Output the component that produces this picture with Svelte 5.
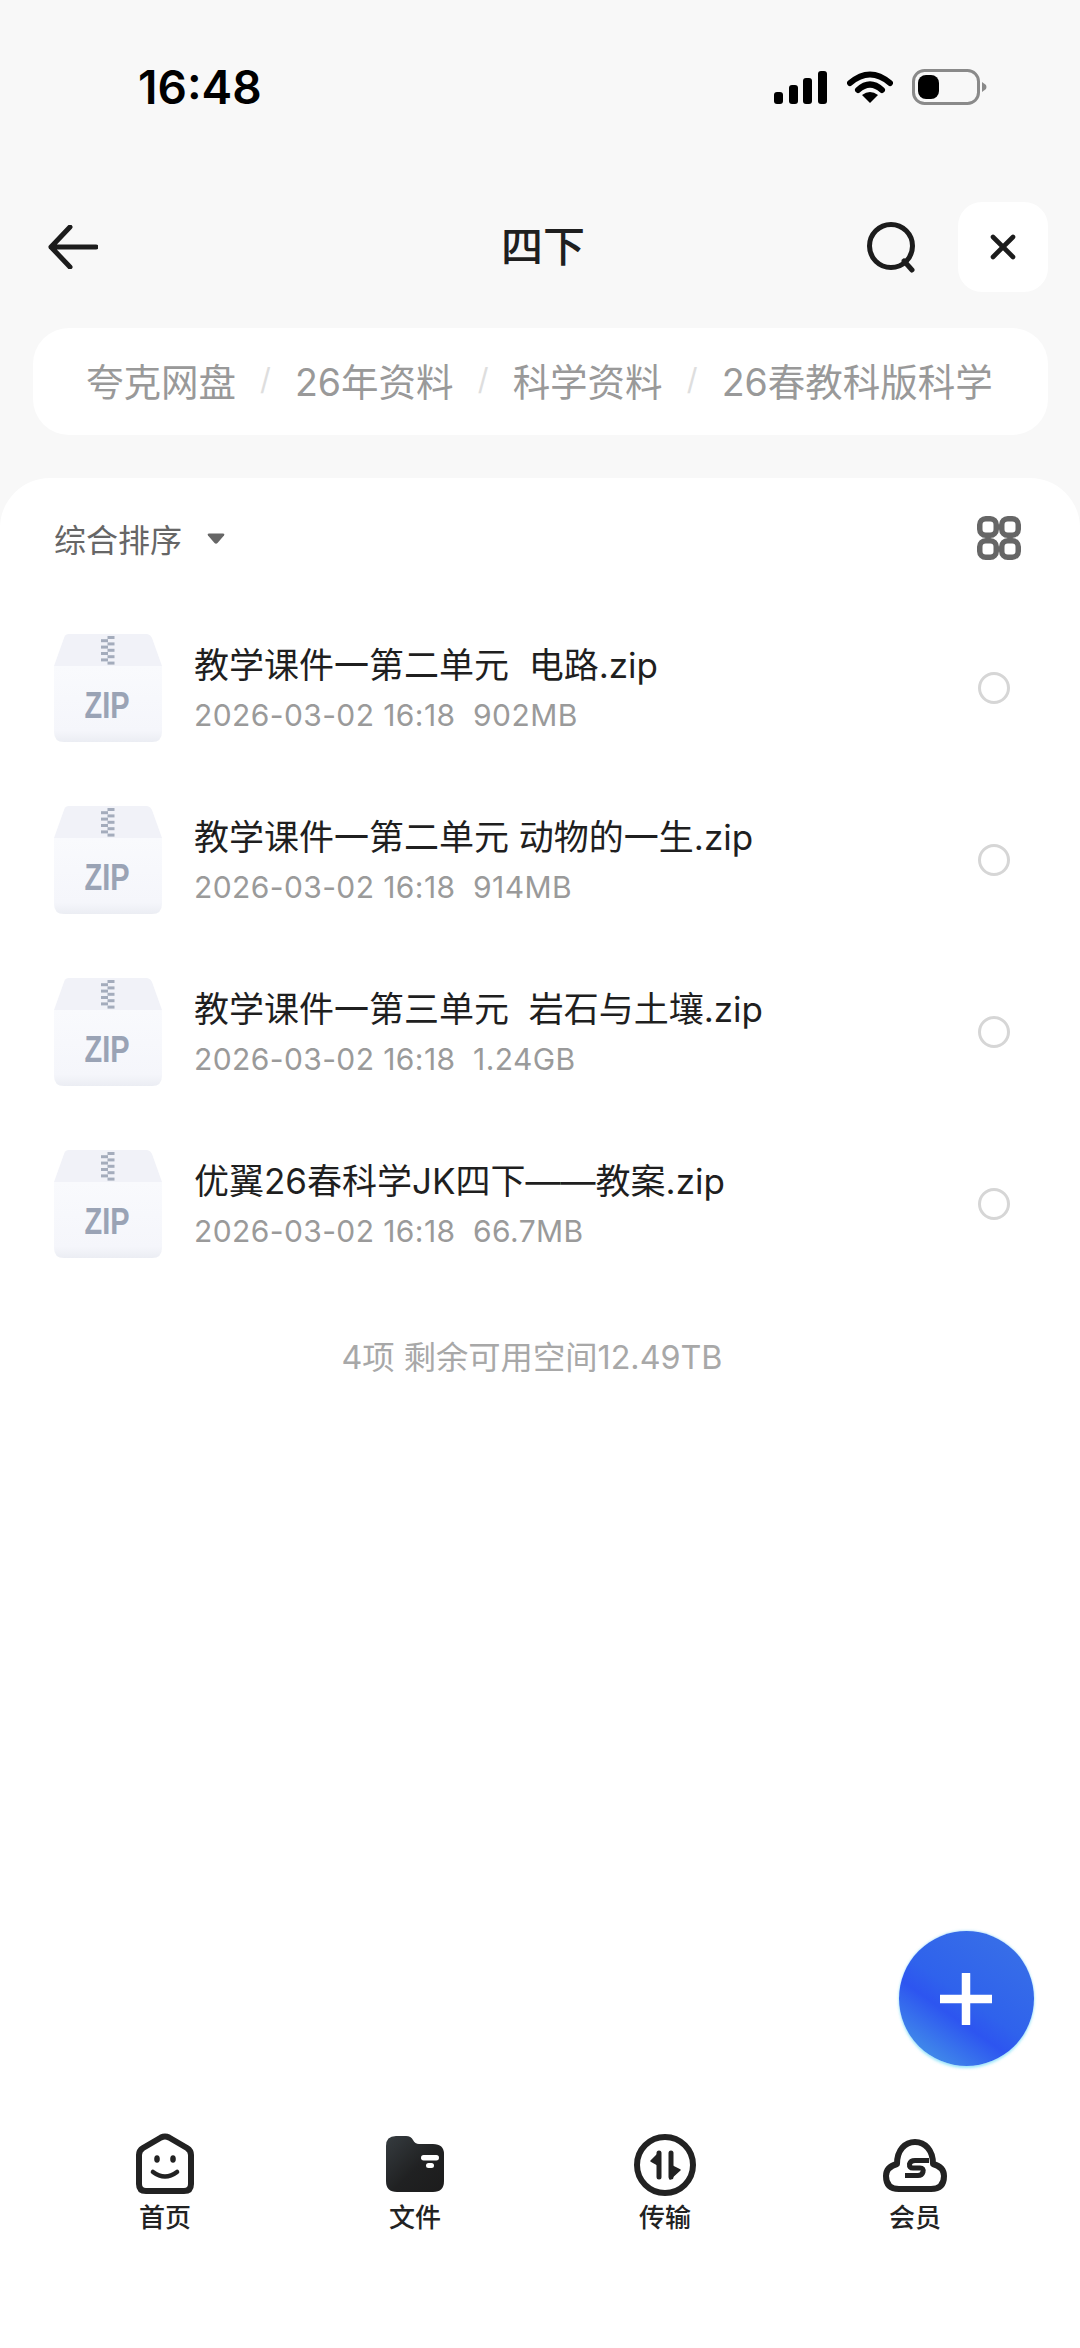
<script>
  const files = [
    { name: '教学课件一第二单元  电路.zip', meta: '2026-03-02 16:18  902MB' },
    { name: '教学课件一第二单元 动物的一生.zip', meta: '2026-03-02 16:18  914MB' },
    { name: '教学课件一第三单元  岩石与土壤.zip', meta: '2026-03-02 16:18  1.24GB' },
    { name: '优翼26春科学JK四下——教案.zip', meta: '2026-03-02 16:18  66.7MB' }
  ];
  const crumbs = ['夸克网盘', '26年资料', '科学资料', '26春教科版科学'];
  const teeth = [0, 1, 2, 3, 4, 5, 6, 7, 8];
</script>

<div class="page">
  <div class="status">
    <span class="time">16:48</span>
    <div class="sysicons">
      <svg width="54" height="34" viewBox="0 0 54 34" class="signal">
        <rect x="0" y="22" width="9" height="12" rx="3" />
        <rect x="15" y="15" width="9" height="19" rx="3" />
        <rect x="29" y="8" width="9" height="26" rx="3" />
        <rect x="44" y="1" width="9" height="33" rx="3" />
      </svg>
      <svg width="46" height="34" viewBox="0 0 46 34" class="wifi">
        <path d="M3 13 Q23 -4 43 13" fill="none" stroke="#000" stroke-width="6" stroke-linecap="round" />
        <path d="M11 20 Q23 9 35 20" fill="none" stroke="#000" stroke-width="6" stroke-linecap="round" />
        <path d="M15 25 Q23 19 31 25 L23 33 Z" fill="#000" />
      </svg>
      <svg width="76" height="36" viewBox="0 0 76 36" class="battery">
        <rect x="1.5" y="1.5" width="65" height="33" rx="11" fill="none" stroke="#8a8a8a" stroke-width="3" />
        <rect x="6" y="6" width="21" height="24" rx="8" fill="#000" />
        <path d="M70 13 L74 16 Q75 18 74 20 L70 23 Z" fill="#8a8a8a" />
      </svg>
    </div>
  </div>

  <header class="nav">
    <svg class="back" width="50" height="44" viewBox="0 0 50 44">
      <path d="M22 2 L3 22 L22 42 M3 22 H48" fill="none" stroke="#1c1c1c" stroke-width="5" stroke-linecap="round" stroke-linejoin="round" />
    </svg>
    <h1 class="title">四下</h1>
    <div class="actions">
      <svg width="52" height="52" viewBox="0 0 52 52">
        <circle cx="25" cy="25" r="21.5" fill="none" stroke="#1c1c1c" stroke-width="5" />
        <path d="M38 40 L46 49" fill="none" stroke="#1c1c1c" stroke-width="5" stroke-linecap="round" />
      </svg>
      <div class="closebox">
        <svg width="28" height="28" viewBox="0 0 28 28">
          <path d="M4 4 L24 24 M24 4 L4 24" fill="none" stroke="#1c1c1c" stroke-width="4.6" stroke-linecap="round" />
        </svg>
      </div>
    </div>
  </header>

  <nav class="crumbs">
    {#each crumbs as c, i}
      {#if i > 0}<span class="sep">/</span>{/if}
      <span class="crumb">{c}</span>
    {/each}
  </nav>

  <main class="sheet">
    <div class="toolbar">
      <div class="sort">
        <span>综合排序</span>
        <svg width="20" height="13" viewBox="0 0 20 13"><path d="M3 1.5 H17 Q19 1.5 18 3.5 L11.5 11 Q10 12.5 8.5 11 L2 3.5 Q1 1.5 3 1.5 Z" fill="#666" /></svg>
      </div>
      <svg width="44" height="44" viewBox="0 0 44 44" class="grid">
        <rect x="2.75" y="2.75" width="16.5" height="16.5" rx="6" />
        <rect x="24.75" y="2.75" width="16.5" height="16.5" rx="6" />
        <rect x="2.75" y="24.75" width="16.5" height="16.5" rx="6" />
        <rect x="24.75" y="24.75" width="16.5" height="16.5" rx="6" />
      </svg>
    </div>

    <ul class="list">
      {#each files as f}
        <li class="row">
          <svg class="zip" width="108" height="108" viewBox="0 0 108 108">
            <defs>
              <linearGradient id="zipbody" x1="0" y1="0" x2="0" y2="1">
                <stop offset="0" stop-color="#f9fafd" />
                <stop offset="0.85" stop-color="#f5f6fb" />
                <stop offset="1" stop-color="#ebedf3" />
              </linearGradient>
            </defs>
            <path d="M15 0 H92 Q96 0 98 4 L108 32 H0 L10 4 Q11 0 15 0 Z" fill="#f1f2f8" />
            <path d="M0 32 H108 V98 Q108 108 98 108 H10 Q0 108 0 98 Z" fill="url(#zipbody)" />
            {#each teeth as t}
              <rect x={t % 2 ? 47 : 53.5} y={2 + t * 3.2} width="7" height="3" fill="#a4acbc" />
            {/each}
            <text x="53" y="84" text-anchor="middle" textLength="45" lengthAdjust="spacingAndGlyphs" class="ziptext">ZIP</text>
          </svg>
          <div class="info">
            <div class="name">{f.name}</div>
            <div class="meta">{f.meta}</div>
          </div>
          <span class="radio"></span>
        </li>
      {/each}
    </ul>

    <p class="summary">4项 剩余可用空间12.49TB</p>

    <div class="tabs">
      <div class="tab">
        <svg width="60" height="64" viewBox="0 0 60 64">
          <path d="M26 5.5 Q30 3.5 34 5.5 L52 16 Q56 18.5 56 23 V52 Q56 59 49 59 H11 Q4 59 4 52 V23 Q4 18.5 8 16 Z" fill="none" stroke="#222" stroke-width="6" stroke-linejoin="round" />
          <ellipse cx="22" cy="27" rx="2.8" ry="3.8" fill="#222" />
          <ellipse cx="38" cy="27" rx="2.8" ry="3.8" fill="#222" />
          <path d="M18 40 Q30 49 42 40" fill="none" stroke="#222" stroke-width="4.6" stroke-linecap="round" />
        </svg>
        <span>首页</span>
      </div>
      <div class="tab">
        <svg width="60" height="64" viewBox="0 0 60 64">
          <defs>
            <linearGradient id="folder" x1="0" y1="0" x2="1" y2="1">
              <stop offset="0" stop-color="#363c40" />
              <stop offset="0.55" stop-color="#202122" />
              <stop offset="1" stop-color="#1c1c1c" />
            </linearGradient>
          </defs>
          <path d="M11 4 H21 Q26 4 28 8 Q30 12 34 12 H48 Q59 12 59 22 V49 Q59 60 48 60 H12 Q1 60 1 49 V14 Q1 4 11 4 Z" fill="url(#folder)" />
          <rect x="36" y="23" width="18" height="5.5" rx="2.7" fill="#fff" />
          <rect x="41" y="31" width="8" height="5" rx="2.5" fill="#fff" />
        </svg>
        <span>文件</span>
      </div>
      <div class="tab">
        <svg width="64" height="64" viewBox="0 0 64 64">
          <circle cx="32" cy="33" r="28" fill="none" stroke="#222" stroke-width="6" />
          <path d="M26 45 V21" fill="none" stroke="#222" stroke-width="5" stroke-linecap="round" />
          <path d="M27 20 L18 29 L27 34 Z" fill="#222" stroke="#222" stroke-width="1.5" stroke-linejoin="round" />
          <path d="M38 21 V45" fill="none" stroke="#222" stroke-width="5" stroke-linecap="round" />
          <path d="M37 47 L47 38 L37 33 Z" fill="#222" stroke="#222" stroke-width="1.5" stroke-linejoin="round" />
        </svg>
        <span>传输</span>
      </div>
      <div class="tab">
        <svg width="66" height="64" viewBox="0 0 66 64">
          <path d="M17 57 Q4 57 4 44 C4 38 8 34 15 32 C15 18 23 10 33 10 C43 10 51 18 51 32 C58 34 62 38 62 44 Q62 57 49 57 Z" fill="none" stroke="#222" stroke-width="6" stroke-linejoin="round" />
          <path d="M47 28.5 H33 Q28.5 28.5 27.5 32 Q27 36 31 36 H38 Q42 36 41 40 Q40 43.5 36 43.5 H23" fill="none" stroke="#222" stroke-width="5" />
        </svg>
        <span>会员</span>
      </div>
    </div>
  </main>

  <button class="fab" aria-label="新建">
    <svg width="52" height="52" viewBox="0 0 52 52">
      <path d="M26 1 V51 M1 26 H51" stroke="#fff" stroke-width="8.5" stroke-linecap="round" />
    </svg>
  </button>
</div>

<style>
  :global(body) {
    margin: 0;
    background: #f8f8f8;
  }
  .page {
    position: relative;
    width: 1080px;
    height: 2348px;
    display: flex;
    flex-direction: column;
    background: #f8f8f8;
    overflow: hidden;
    font-family: Inter, "Noto Sans CJK SC", sans-serif;
    color: #1f1f1f;
  }
  .status {
    height: 174px;
    box-sizing: border-box;
    padding: 0 92px 0 138px;
    display: flex;
    align-items: center;
    justify-content: space-between;
    flex: none;
  }
  .time {
    font-size: 46px;
    font-weight: 600;
    color: #000;
  }
  .sysicons {
    display: flex;
    align-items: center;
    gap: 19px;
  }
  .signal rect {
    fill: #000;
  }
  .nav {
    position: relative;
    height: 146px;
    flex: none;
    box-sizing: border-box;
    padding: 0 32px 0 48px;
    display: flex;
    align-items: center;
    justify-content: space-between;
  }
  .title {
    margin: 0;
    position: absolute;
    left: 6px;
    right: 0;
    text-align: center;
    font-size: 42px;
    font-weight: 500;
    line-height: 1.2;
    pointer-events: none;
  }
  .actions {
    display: flex;
    align-items: center;
    gap: 40px;
  }
  .closebox {
    width: 90px;
    height: 90px;
    border-radius: 24px;
    background: #fff;
    display: flex;
    align-items: center;
    justify-content: center;
  }
  .crumbs {
    flex: none;
    margin: 8px 32px 43px 33px;
    height: 107px;
    border-radius: 36px;
    background: #fff;
    box-sizing: border-box;
    padding: 0 53px 5px;
    display: flex;
    align-items: center;
    font-size: 37.5px;
    color: #999;
    white-space: nowrap;
  }
  .sep {
    color: #dedede;
    font-size: 30px;
    width: 59px;
    text-align: center;
  }
  .sheet {
    flex: 1;
    min-height: 0;
    background: #fff;
    border-radius: 50px 50px 0 0;
    display: flex;
    flex-direction: column;
  }
  .toolbar {
    flex: none;
    height: 124px;
    box-sizing: border-box;
    padding: 0 59px 4px 54px;
    display: flex;
    align-items: center;
    justify-content: space-between;
  }
  .sort {
    display: flex;
    align-items: center;
    gap: 24px;
    font-size: 32px;
    color: #666;
  }
  .grid rect {
    fill: none;
    stroke: #666;
    stroke-width: 5.5;
  }
  .list {
    list-style: none;
    margin: 0;
    padding: 0;
  }
  .row {
    height: 172px;
    box-sizing: border-box;
    padding: 0 70px 0 54px;
    display: flex;
    align-items: center;
  }
  .zip {
    flex: none;
  }
  .ziptext {
    font-family: "Liberation Sans", sans-serif;
    font-size: 36px;
    font-weight: 700;
    fill: #9aa3b5;
  }
  .info {
    flex: 1;
    min-width: 0;
    margin-left: 32px;
    margin-top: 2px;
  }
  .name {
    font-size: 35px;
    line-height: 44px;
    white-space: pre;
    color: #1f1f1f;
  }
  .meta {
    margin-top: 8px;
    font-size: 30px;
    line-height: 40px;
    white-space: pre;
    color: #9a9a9a;
    letter-spacing: 0.4px;
  }
  .radio {
    flex: none;
    width: 32px;
    height: 32px;
    box-sizing: border-box;
    border: 3px solid #d6d6d6;
    border-radius: 50%;
  }
  .summary {
    margin: 46px 16px 0 0;
    text-align: center;
    font-size: 32.3px;
    line-height: 44px;
    color: #a8a8a8;
  }
  .tabs {
    margin-top: auto;
    flex: none;
    height: 228px;
    box-sizing: border-box;
    padding: 12px 40px 0;
    display: grid;
    grid-template-columns: repeat(4, 1fr);
  }
  .tab {
    display: flex;
    flex-direction: column;
    align-items: center;
    font-size: 26px;
    font-weight: 500;
    line-height: 36px;
    color: #222;
  }
  .tab span {
    margin-top: 4px;
  }
  .fab {
    position: absolute;
    left: 899px;
    top: 1931px;
    width: 135px;
    height: 135px;
    padding: 0 2px 0 0;
    border: none;
    border-radius: 50%;
    display: flex;
    align-items: center;
    justify-content: center;
    background: linear-gradient(215deg, #3a72e6 0%, #2f62ec 50%, #2d55f0 62%, #3f86ea 85%, #58aef0 100%);
    box-shadow: 0 2px 3px rgba(110, 220, 250, 0.7), 0 -1px 2px rgba(150, 220, 250, 0.5);
  }
</style>
